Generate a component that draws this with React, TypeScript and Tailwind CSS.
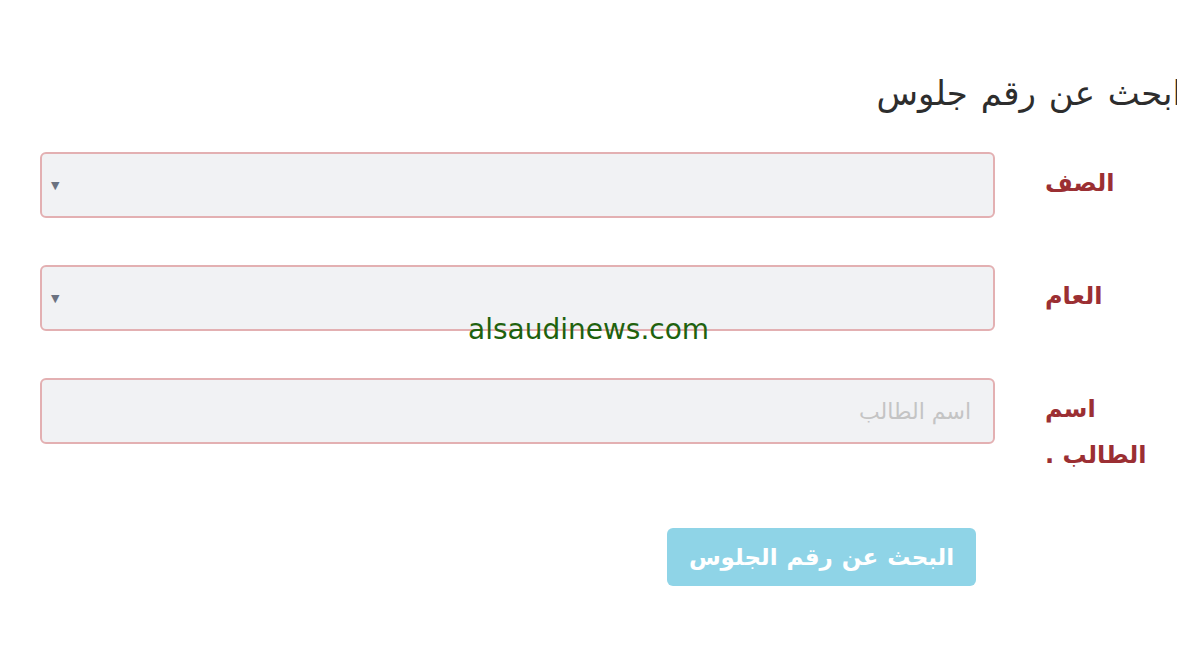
import React from 'react';

const fieldCls =
  'h-[66px] w-[955px] rounded-md border-2 border-[#e3b0b2] bg-[#f1f2f4] flex items-center';

const Row = ({ label, children }: { label: React.ReactNode; children: React.ReactNode }) => (
  <div className="flex items-start">
    {children}
    <div
      dir="rtl"
      className="ml-[50px] w-[132px] pt-[8px] text-left text-[24px] font-bold leading-[46px] text-[#9b2f33]"
    >
      {label}
    </div>
  </div>
);

const Arrow = () => (
  <span className="ml-[9px] text-[11px] leading-none text-[#6b7280]">▼</span>
);

export default function App() {
  return (
    <div className="relative h-[658px] w-[1177px] overflow-hidden bg-white font-['DejaVu_Sans',sans-serif]">
      <div className="pl-[40px] pt-[70px]">
        {/* Heading, clipped on the right */}
        <div dir="rtl" className="mr-[-5px] text-[34px] leading-[46px] text-[#2d2d2d] [word-spacing:2px]">
          ابحث عن رقم جلوس
        </div>

        <div className="mt-[36px] flex flex-col gap-[47px]">
          <Row label="الصف">
            <div className={fieldCls}>
              <Arrow />
            </div>
          </Row>
          <Row label="العام">
            <div className={fieldCls}>
              <Arrow />
            </div>
          </Row>
          <Row label="اسم الطالب .">
            <div className={fieldCls} dir="rtl">
              <span className="mr-[22px] text-[22px] text-[#c4c4c4]">اسم الطالب</span>
            </div>
          </Row>
        </div>

        <div className="mt-[50px] pl-[627px]">
          <button
            dir="rtl"
            className="h-[58px] w-[309px] rounded-md bg-[#8fd4e7] text-[23px] font-bold text-white [word-spacing:1px]"
          >
            البحث عن رقم الجلوس
          </button>
        </div>
      </div>

      {/* watermark */}
      <div className="absolute left-[468px] top-[310px] text-[28px] leading-[40px] text-[#1f620e]">
        alsaudinews.com
      </div>
    </div>
  );
}
